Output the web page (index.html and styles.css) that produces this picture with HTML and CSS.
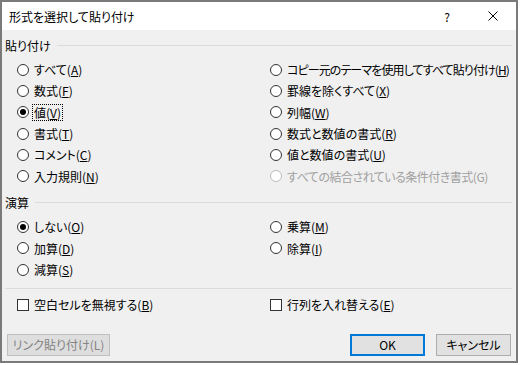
FILE: index.html
```html
<!DOCTYPE html>
<html lang="ja">
<head>
  <meta charset="UTF-8">
  <meta name="viewport" content="width=device-width, initial-scale=1">
  <title>形式を選択して貼り付け</title>
  <link rel="stylesheet" href="styles.css">
</head>
<body>

<div class="dialog">
  <!-- タイトルバー -->
  <div class="titlebar">
    <span class="title">形式を選択して貼り付け</span>
    <span class="tb-btn">?</span>
    <span class="tb-btn">
      <svg width="10" height="10" viewBox="0 0 10 10"><path d="M0.5 0.5 L9.5 9.5 M9.5 0.5 L0.5 9.5" stroke="#000" stroke-width="1" fill="none"/></svg>
    </span>
  </div>

  <div class="content">
    <!-- 貼り付け -->
    <div class="group-head"><span>貼り付け</span><i></i></div>
    <div class="options paste">
      <label class="opt"><span class="radio"></span><span>すべて(<u>A</u>)</span></label>
      <label class="opt"><span class="radio"></span><span class="tighter">コピー元のテーマを使用してすべて貼り付け(<u>H</u>)</span></label>
      <label class="opt"><span class="radio"></span><span>数式(<u>F</u>)</span></label>
      <label class="opt"><span class="radio"></span><span>罫線を除くすべて(<u>X</u>)</span></label>
      <label class="opt"><span class="radio checked"></span><span class="focus">値(<u>V</u>)</span></label>
      <label class="opt"><span class="radio"></span><span>列幅(<u>W</u>)</span></label>
      <label class="opt"><span class="radio"></span><span>書式(<u>T</u>)</span></label>
      <label class="opt"><span class="radio"></span><span>数式と数値の書式(<u>R</u>)</span></label>
      <label class="opt"><span class="radio"></span><span>コメント(<u>C</u>)</span></label>
      <label class="opt"><span class="radio"></span><span>値と数値の書式(<u>U</u>)</span></label>
      <label class="opt"><span class="radio"></span><span>入力規則(<u>N</u>)</span></label>
      <label class="opt disabled"><span class="radio"></span><span class="tight">すべての結合されている条件付き書式(G)</span></label>
    </div>

    <!-- 演算 -->
    <div class="group-head op-head"><span>演算</span><i></i></div>
    <div class="options calc">
      <label class="opt"><span class="radio checked"></span><span>しない(<u>O</u>)</span></label>
      <label class="opt"><span class="radio"></span><span>乗算(<u>M</u>)</span></label>
      <label class="opt"><span class="radio"></span><span>加算(<u>D</u>)</span></label>
      <label class="opt"><span class="radio"></span><span>除算(<u>I</u>)</span></label>
      <label class="opt"><span class="radio"></span><span>減算(<u>S</u>)</span></label>
    </div>

    <div class="sep"></div>

    <div class="options checks">
      <label class="opt"><span class="check"></span><span>空白セルを無視する(<u>B</u>)</span></label>
      <label class="opt"><span class="check"></span><span>行列を入れ替える(<u>E</u>)</span></label>
    </div>

    <div class="buttons">
      <button class="btn link" disabled>リンク貼り付け(L)</button>
      <span class="spacer"></span>
      <button class="btn ok">OK</button>
      <button class="btn">キャンセル</button>
    </div>
  </div>
</div>

</body>
</html>
```

FILE: styles.css
```css
body {
  margin: 0;
  background: #fff;
  font-family: "Noto Sans CJK JP", "Noto Sans", sans-serif;
  font-size: 12px;
  font-feature-settings: "palt";
  color: #000;
}

.dialog {
  width: 518px;
  height: 363px;
  box-sizing: border-box;
  border: 2px solid #7a7a7a;
  background: #f0f0f0;
  display: flex;
  flex-direction: column;
}

/* タイトルバー */
.titlebar {
  height: 28px;
  background: #fff;
  display: flex;
  align-items: center;
  padding-left: 7px;
}

.title {
  flex: 1;
}

.tb-btn {
  width: 46px;
  display: flex;
  justify-content: center;
  align-items: center;
  font-size: 12px;
}

.content {
  flex: 1;
  display: flex;
  flex-direction: column;
  padding: 0 4px 0 3px;
}

/* グループ見出し */
.group-head {
  display: flex;
  align-items: center;
  height: 16px;
  margin-top: 7px;
  gap: 6px;
}

.group-head i {
  flex: 1;
  height: 1px;
  background: #dcdcdc;
}

.op-head {
  margin-top: 8px;
}

.options {
  display: grid;
  grid-template-columns: 253px 1fr;
  padding-left: 12px;
}

.paste {
  margin-top: 6px;
  grid-auto-rows: 21.33px;
}

.calc {
  margin-top: 5px;
  grid-auto-rows: 21.6px;
}

.opt {
  display: flex;
  align-items: center;
  gap: 5px;
  white-space: nowrap;
}

.opt u {
  text-underline-offset: 1px;
}

.tight {
  letter-spacing: -0.5px;
}

.tighter {
  letter-spacing: -0.9px;
}

.radio {
  width: 12px;
  height: 12px;
  box-sizing: border-box;
  border: 1px solid #333;
  border-radius: 50%;
  background: #fff;
  display: flex;
  justify-content: center;
  align-items: center;
  flex: none;
}

.radio.checked::after {
  content: "";
  width: 6px;
  height: 6px;
  border-radius: 50%;
  background: #000;
}

.disabled {
  color: #a0a0a0;
}

.disabled .radio {
  border-color: #bcbcbc;
}

.focus {
  outline: 1px dotted #000;
  padding: 0 1px;
  margin-left: -1px;
  line-height: 15px;
}

.sep {
  height: 1px;
  background: #dcdcdc;
  margin-top: 7px;
}

.checks {
  margin-top: 6px;
  grid-auto-rows: 20px;
}

.check {
  width: 12px;
  height: 12px;
  box-sizing: border-box;
  border: 1px solid #333;
  background: #fff;
  flex: none;
}

/* ボタン */
.buttons {
  display: flex;
  gap: 11px;
  margin-top: 19px;
  padding-left: 2px;
  padding-right: 1px;
}

.spacer {
  flex: 1;
}

.btn {
  height: 22px;
  width: 75px;
  font: inherit;
  font-feature-settings: "palt";
  background: #e1e1e1;
  border: 1px solid #adadad;
  color: #000;
  padding: 0;
}

.btn.ok {
  border: 2px solid #0078d7;
}

.btn.link {
  width: 103px;
  background: #dedede;
  border-color: #bfbfbf;
  color: #838383;
}
```
